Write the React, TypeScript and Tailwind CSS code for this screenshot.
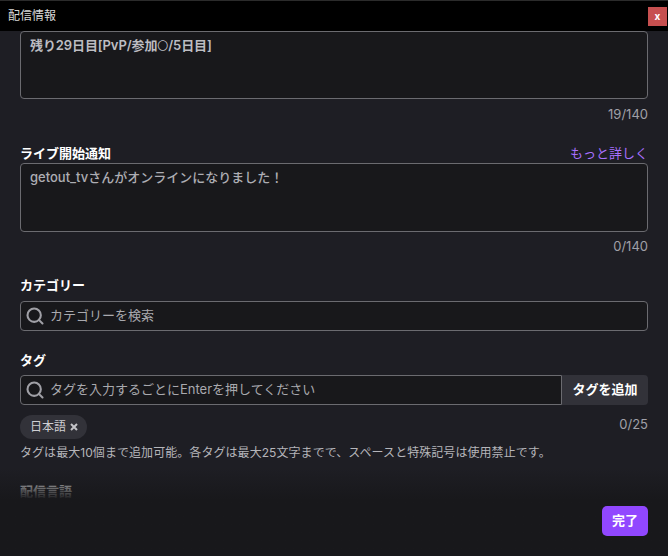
import type { ReactNode } from "react";
import { Search } from "lucide-react";

const font = "[font-family:Inter,'Noto_Sans_CJK_JP','Liberation_Sans',sans-serif]";

function Field({ children, tall }: { children: ReactNode; tall?: boolean }) {
  return (
    <div className={`${tall ? "h-[69px] font-medium text-[#adadb3]" : "h-[68px] font-semibold tracking-[-0.1px] text-[#bdbdc2]"} rounded-[4px] border border-[#6b6b70] bg-[#18181b] px-[9px] py-[4px] text-[13px] leading-[18px]`}>
      {children}
    </div>
  );
}

function SearchIcon() {
  return <Search size={20} strokeWidth={2.5} className="shrink-0 text-[#a0a0a6]" />;
}

export default function App() {
  return (
    <div className={`relative flex h-[556px] w-[668px] flex-col overflow-hidden bg-[#1e1e24] text-[13px] text-[#c4c4c8] ${font}`}>
      <header className="flex h-[31px] shrink-0 items-center justify-between border-t border-[#2b2b2b] bg-black pl-2 pr-[1px]">
        <span className="text-[12px] text-[#d8d8d8]">配信情報</span>
        <button className="flex h-[19px] w-[19px] items-center justify-center bg-[#c75050] text-[10px] leading-none font-bold text-white">x</button>
      </header>

      <main className="flex flex-col px-5">
        <Field>
          残り29日目[PvP/参加<span className="text-[11px] font-normal">〇</span>/5日目]
        </Field>
        <div className="mt-[6px] h-[18px] text-right text-[13px] leading-[18px] text-[#a0a0a8]">19/140</div>

        <div className="mt-[22px] flex h-[17px] items-center justify-between">
          <span className="text-[13px] font-bold text-white">ライブ開始通知</span>
          <span className="text-[13px] text-[#a970ff]">もっと詳しく</span>
        </div>
        <div className="mt-[1px]">
          <Field tall>getout_tvさんがオンラインになりました！</Field>
        </div>
        <div className="mt-[5px] h-[18px] text-right text-[13px] leading-[18px] text-[#a0a0a8]">0/140</div>

        <div className="mt-[21px] h-[18px] text-[13px] leading-[18px] font-bold text-white">カテゴリー</div>
        <div className="mt-[7px] flex h-[30px] items-center gap-[5px] rounded-[4px] border border-[#6b6b70] bg-[#18181b] pl-[4px] text-[13px] text-[#a9a9ae]">
          <SearchIcon />
          <span>カテゴリーを検索</span>
        </div>

        <div className="mt-[20px] h-[18px] text-[13px] leading-[18px] font-bold text-white">タグ</div>
        <div className="mt-[6px] flex h-[30px]">
          <div className="flex flex-1 items-center gap-[5px] rounded-l-[4px] border border-[#6b6b70] bg-[#18181b] pl-[4px] text-[13px] text-[#a9a9ae]">
            <SearchIcon />
            <span>タグを入力するごとにEnterを押してください</span>
          </div>
          <button className="w-[86px] rounded-r-[4px] bg-[#323239] text-[13px] font-bold text-white">タグを追加</button>
        </div>

        <div className="mt-[10px] flex items-start justify-between">
          <div className="flex h-[24px] w-[67px] items-center gap-[4px] rounded-full bg-[#323239] pl-[10px] text-[12px] text-[#cfcfd3]">
            <span>日本語</span>
            <svg width="8" height="8" viewBox="0 0 8 8" className="text-[#c4c4c8]">
              <path d="M1 1l6 6M7 1L1 7" stroke="currentColor" strokeWidth="2" />
            </svg>
          </div>
          <span className="text-[13px] leading-[18px] text-[#a0a0a8]">0/25</span>
        </div>
        <p className="mt-[5px] text-[12px] leading-[18px] tracking-[0.06px] text-[#b5b5ba]">
          タグは最大10個まで追加可能。各タグは最大25文字までで、スペースと特殊記号は使用禁止です。
        </p>
        <div className="mt-[20px] h-[18px] text-[13px] leading-[18px] font-bold text-white">配信言語</div>
      </main>

      <div className="absolute inset-x-0 bottom-0 h-[88px] bg-gradient-to-b from-[#18181b00] to-[#18181b] to-[36%]" />
      <button className="absolute right-5 bottom-5 h-[30px] w-[46px] rounded-[5px] bg-[#9147ff] text-[13px] font-bold text-white">完了</button>
    </div>
  );
}
